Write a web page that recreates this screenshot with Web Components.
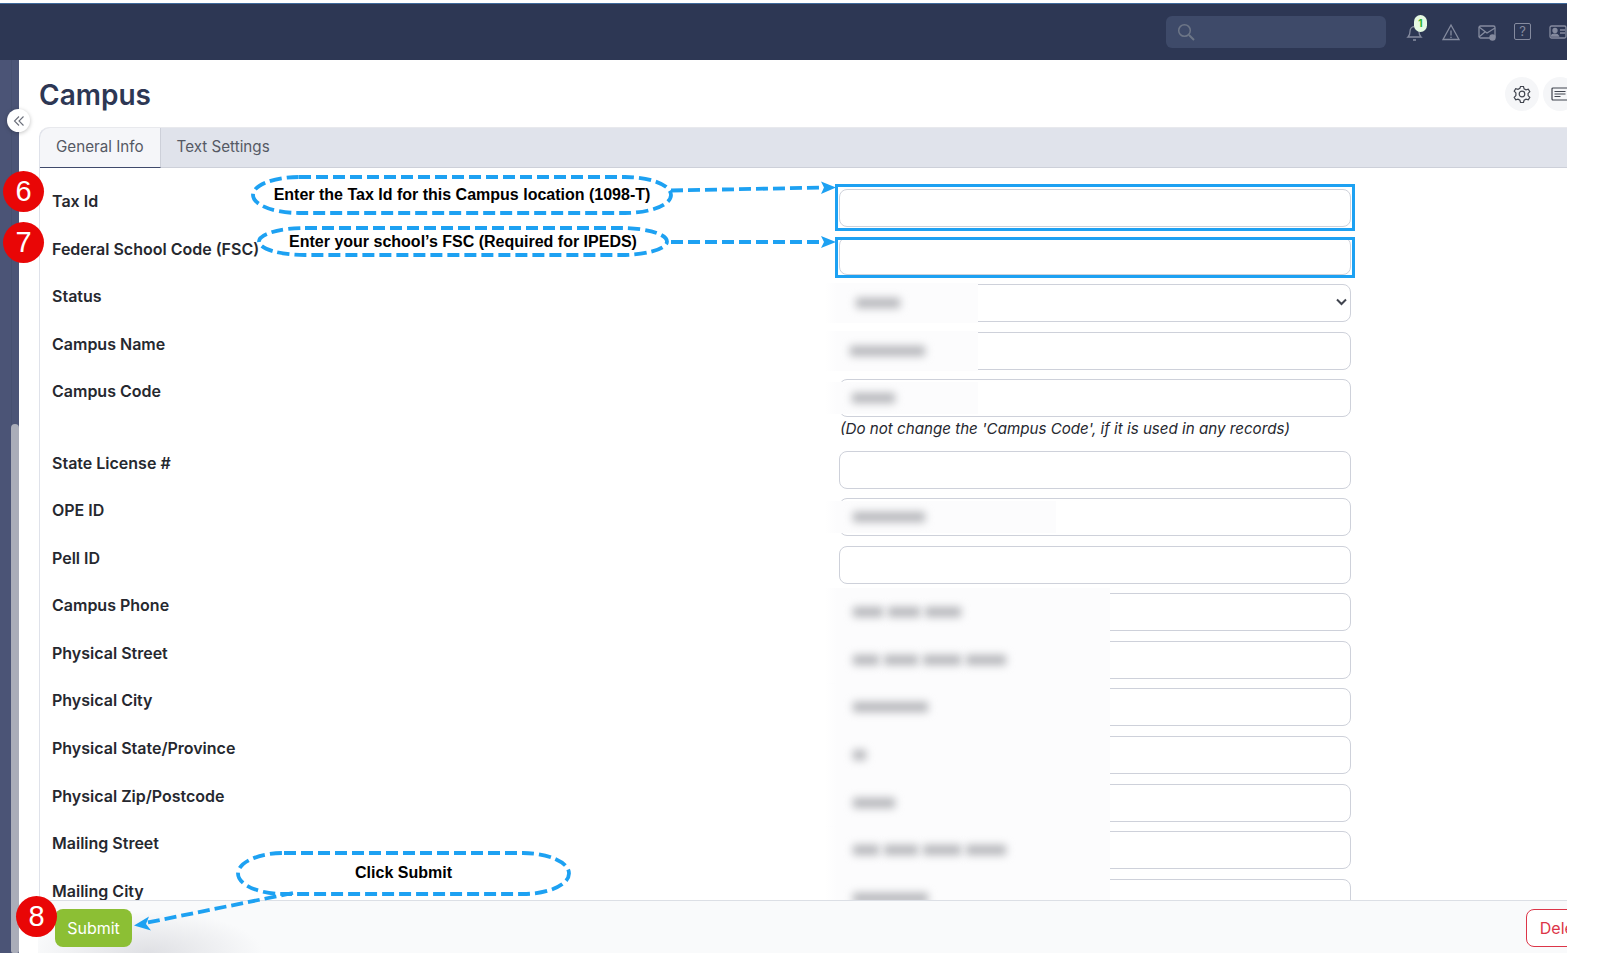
<!doctype html>
<html>
<head>
<meta charset="utf-8">
<title>Campus</title>
<style>
  html, body { margin: 0; padding: 0; background: #fff; }
  body { font-family: Inter, "Liberation Sans", sans-serif; }
</style>
</head>
<body>
<campus-app>
  <top-bar slot="top"></top-bar>
  <side-rail slot="side"></side-rail>
  <page-head slot="main" heading="Campus"></page-head>
  <tab-strip slot="main">
    <tab-item active>General Info</tab-item>
    <tab-item>Text Settings</tab-item>
  </tab-strip>
  <campus-form slot="main">
    <form-row label="Tax Id"><text-field style="--mark-top:-5px;--mark-bottom:-4px" marked></text-field></form-row>
    <form-row label="Federal School Code (FSC)"><text-field style="--mark-top:0px;--mark-bottom:-3px" marked></text-field></form-row>
    <form-row label="Status"><text-field kind="select" patch="139" bars="44" bar-left="17"></text-field></form-row>
    <form-row label="Campus Name"><text-field patch="139" bars="75" bar-left="11"></text-field></form-row>
    <form-row label="Campus Code" hint="(Do not change the 'Campus Code', if it is used in any records)"><text-field patch="139" bars="43" bar-left="13" inner></text-field></form-row>
    <form-row label="State License #"><text-field></text-field></form-row>
    <form-row label="OPE ID"><text-field patch="217" bars="72" bar-left="14" inner></text-field></form-row>
    <form-row label="Pell ID"><text-field></text-field></form-row>
    <form-row label="Campus Phone"><text-field patch="271" bars="30,32,36" bar-left="14" tall></text-field></form-row>
    <form-row label="Physical Street"><text-field patch="271" bars="26,34,38,40" bar-left="14" tall></text-field></form-row>
    <form-row label="Physical City"><text-field patch="271" bars="75" bar-left="14" tall></text-field></form-row>
    <form-row label="Physical State/Province"><text-field patch="271" bars="13" bar-left="14" tall></text-field></form-row>
    <form-row label="Physical Zip/Postcode"><text-field patch="271" bars="42" bar-left="14" tall></text-field></form-row>
    <form-row label="Mailing Street"><text-field patch="271" bars="26,34,38,40" bar-left="14" tall></text-field></form-row>
    <form-row label="Mailing City"><text-field patch="271" bars="75" bar-left="14" tall></text-field></form-row>
  </campus-form>
  <action-bar slot="main"></action-bar>
  <note-layer slot="notes">
    <step-badge style="left:3px;top:171px">6</step-badge>
    <step-badge style="left:3px;top:222px">7</step-badge>
    <step-badge style="left:16px;top:896px">8</step-badge>
    <note-bubble style="left:253px;top:177px;width:418px;height:36px;--text-shift:0px">Enter the Tax Id for this Campus location (1098-T)</note-bubble>
    <note-bubble style="left:259px;top:228px;width:408px;height:27px">Enter your school’s FSC (Required for IPEDS)</note-bubble>
    <note-bubble style="left:238px;top:853px;width:331px;height:41px;--text-shift:-1px">Click Submit</note-bubble>
  </note-layer>
</campus-app>

<script>
const ICON = 'fill="none" stroke="#858b9f" stroke-width="1.3"'

class CampusApp extends HTMLElement {
  constructor() {
    super()
    this.attachShadow({ mode: 'open' })
    this.shadowRoot.innerHTML = `
      <style>
        :host {
          display: block;
          position: relative;
          width: 1567px;
          height: 953px;
          overflow: hidden;
          padding-top: 3px;
          box-sizing: border-box;
        }
        .body { display: flex; height: 893px; width: 1620px; }
        .main { display: flex; flex-direction: column; width: 1601px; min-width: 0; }
      </style>
      <slot name="top"></slot>
      <div class="body">
        <slot name="side"></slot>
        <div class="main"><slot name="main"></slot></div>
      </div>
      <slot name="notes"></slot>
    `
  }
}

class TopBar extends HTMLElement {
  constructor() {
    super()
    this.attachShadow({ mode: 'open' })
    this.shadowRoot.innerHTML = `
      <style>
        :host {
          display: flex;
          align-items: center;
          box-sizing: border-box;
          width: 1620px;
          height: 57px;
          padding-left: 1166px;
          background: #2d3754;
          border-top: 1px solid #3f6a9c;
        }
        .search {
          display: flex;
          align-items: center;
          width: 220px;
          height: 32px;
          margin-right: 19px;
          padding-left: 11px;
          box-sizing: border-box;
          background: #3e4a69;
          border-radius: 6px;
        }
        .icons { display: flex; gap: 16px; }
        .icon { position: relative; width: 20px; height: 20px; }
        svg { display: block; }
        .badge {
          position: absolute;
          left: 9px;
          top: -7px;
          width: 13px;
          height: 17px;
          border-radius: 7px;
          background: #e5f9e2;
          color: #2db32d;
          font: 700 10px/17px Inter, sans-serif;
          text-align: center;
        }
        .help { font: 13px/20px Inter, sans-serif; color: #858b9f; text-align: center; border: 1.3px solid #858b9f; border-radius: 2px; box-sizing: border-box; width: 17px; height: 17px; line-height: 15px; margin: 1px 1px 0; }
      </style>
      <div class="search">
        <svg width="18" height="18" viewBox="0 0 18 18" fill="none" stroke="#6d7687" stroke-width="1.5"><circle cx="7.5" cy="7.5" r="5.8"/><path d="M12 12l5 5" stroke-width="2"/></svg>
      </div>
      <div class="icons">
        <div class="icon">
          <svg width="20" height="20" viewBox="0 0 20 20" ${ICON}><path d="M3 15c1.5-1.3 2-2.6 2-5.5C5 6.500 7 4.500 9.500 4.500S14 6.500 14 9.500c0 2.900.5 4.200 2 5.500z"/><path d="M8 18h3" stroke-width="1.6"/></svg>
          <span class="badge">1</span>
        </div>
        <div class="icon">
          <svg width="20" height="20" viewBox="0 0 20 20" ${ICON}><path d="M10 3L2 17.500h16z"/><path d="M10 8.500v5M10 14.800v1.200"/></svg>
        </div>
        <div class="icon">
          <svg width="20" height="20" viewBox="0 0 20 20" ${ICON}><rect x="2" y="4" width="16" height="12" rx="1.500"/><path d="M2 5l8 6 8-5M2 15l6-5"/><circle cx="15.500" cy="15.500" r="3.200" fill="#858b9f" stroke="none"/></svg>
        </div>
        <div class="icon help">?</div>
        <div class="icon">
          <svg width="20" height="20" viewBox="0 0 20 20" ${ICON}><rect x="2" y="4" width="16" height="12" rx="1.500"/><circle cx="7" cy="8.500" r="2" fill="#858b9f"/><path d="M3.500 14c.5-2.500 6-2.500 7 0z" fill="#858b9f"/><path d="M12 8h5M12 11h5"/></svg>
        </div>
      </div>
    `
  }
}

class SideRail extends HTMLElement {
  constructor() {
    super()
    this.attachShadow({ mode: 'open' })
    this.shadowRoot.innerHTML = `
      <style>
        :host {
          display: block;
          position: relative;
          flex: 0 0 19px;
          background: linear-gradient(to right, #4b5476 0, #4b5476 11px, #465070 11px, #465070 12px, #4b5476 12px);
        }
        .thumb {
          position: absolute;
          left: 11px;
          right: 0;
          top: 364px;
          bottom: 0;
          background: #aaadb9;
          border-radius: 4px 4px 2px 2px;
        }
        .collapse {
          position: absolute;
          left: 7px;
          top: 49px;
          width: 23px;
          height: 23px;
          background: #fff;
          border-radius: 50%;
          box-shadow: 0 1px 4px rgba(0, 0, 0, .25);
          display: flex;
          align-items: center;
          justify-content: center;
          z-index: 2;
        }
      </style>
      <div class="thumb"></div>
      <div class="collapse">
        <svg width="12" height="12" viewBox="0 0 12 12" fill="none" stroke="#6b6f7a" stroke-width="1.1"><path d="M6 1.500L1.500 6 6 10.500M10.500 1.500L6 6l4.500 4.500"/></svg>
      </div>
    `
  }
}

class PageHead extends HTMLElement {
  constructor() {
    super()
    this.attachShadow({ mode: 'open' })
    this.shadowRoot.innerHTML = `
      <style>
        :host {
          display: flex;
          align-items: center;
          justify-content: space-between;
          flex: 0 0 67px;
          padding: 5px 43px 0 20px;
          box-sizing: border-box;
        }
        h1 { margin: 0; font: 600 28px/1.2 Inter, sans-serif; color: #2d3754; }
        .tools { display: flex; gap: 4px; margin-top: -4px; }
        .tool {
          width: 34px;
          height: 34px;
          border-radius: 50%;
          background: #f5f6f8;
          display: flex;
          align-items: center;
          justify-content: center;
        }
      </style>
      <h1>${this.getAttribute('heading')}</h1>
      <div class="tools">
        <div class="tool">
          <svg width="18" height="18" viewBox="0 0 18 18" fill="none" stroke="#41454f" stroke-width="1.200"><path d="M7.500 1.500h3l.6 2.300 1.900 1 2.300-.7 1.500 2.600-1.700 1.700v2.200l1.700 1.700-1.500 2.600-2.300-.7-1.900 1-.6 2.300h-3l-.6-2.300-1.900-1-2.300.7-1.500-2.600 1.700-1.700V7.900L1.200 6.200l1.500-2.600 2.300.7 1.900-1z"/><circle cx="9" cy="9" r="2.800"/></svg>
        </div>
        <div class="tool">
          <svg width="18" height="16" viewBox="0 0 18 16" fill="none" stroke="#41454f" stroke-width="1.200"><rect x="1" y="2" width="16" height="12" rx="1"/><path d="M3.500 5.500h11M3.500 8h11M3.500 10.500h6"/></svg>
        </div>
      </div>
    `
  }
}

class TabStrip extends HTMLElement {
  constructor() {
    super()
    this.attachShadow({ mode: 'open' })
    this.shadowRoot.innerHTML = `
      <style>
        :host {
          display: flex;
          flex: 0 0 41px;
          box-sizing: border-box;
          margin-left: 20px;
          background: #e0e3eb;
          border-top: 1px solid #e8e9ed;
          border-bottom: 1px solid #cdd0d9;
          border-left: 1px solid #dfe2ea;
          border-top-left-radius: 10px;
        }
      </style>
      <slot></slot>
    `
  }
}

class TabItem extends HTMLElement {
  constructor() {
    super()
    this.attachShadow({ mode: 'open' })
    this.shadowRoot.innerHTML = `
      <style>
        :host {
          display: block;
          padding: 0 16px;
          font: 15.200px/38px Inter, sans-serif;
          color: #555964;
        }
        :host([active]) {
          background: #f5f6f9;
          margin-bottom: -1px;
          border-right: 1px solid #cdd0d9;
          border-bottom: 1px solid #3f4a6b;
          border-top-left-radius: 10px;
        }
      </style>
      <slot></slot>
    `
  }
}

class CampusForm extends HTMLElement {
  constructor() {
    super()
    this.attachShadow({ mode: 'open' })
    this.shadowRoot.innerHTML = `
      <style>
        :host {
          display: block;
          flex: 1;
          min-height: 0;
          overflow: hidden;
          margin-left: 20px;
          padding: 21px 0 0 12px;
          border-left: 1px solid #dfe2ea;
        }
      </style>
      <slot></slot>
    `
  }
}

class FormRow extends HTMLElement {
  constructor() {
    super()
    this.attachShadow({ mode: 'open' })
    const hint = this.getAttribute('hint')
    this.shadowRoot.innerHTML = `
      <style>
        :host {
          display: grid;
          grid-template-columns: 787px 512px;
          margin-bottom: 9.550px;
        }
        .label {
          font: 600 16px/24px Inter, sans-serif;
          color: #26282f;
        }
        .hint {
          font: italic 15.150px/24px Inter, sans-serif;
          color: #26282f;
          margin: 0 0 0 1px;
          height: 24px;
        }
      </style>
      <div class="label">${this.getAttribute('label')}</div>
      <div>
        <slot></slot>
        ${hint ? `<div class="hint">${hint}</div>` : ''}
      </div>
    `
  }
}

class TextField extends HTMLElement {
  constructor() {
    super()
    this.attachShadow({ mode: 'open' })
    const isSelect = this.getAttribute('kind') === 'select'
    const patch = this.getAttribute('patch')
    const bars = (this.getAttribute('bars') || '').split(',').filter(Boolean)
    this.shadowRoot.innerHTML = `
      <style>
        :host {
          display: block;
          position: relative;
          height: 38px;
        }
        .box {
          display: block;
          width: 100%;
          height: 38px;
          box-sizing: border-box;
          margin: 0;
          background: #fff;
          border: 1px solid #ced1da;
          border-radius: 8px;
          appearance: none;
        }
        .chevron { position: absolute; right: 4px; top: 14px; }
        .mark {
          position: absolute;
          left: -4px;
          right: -4px;
          top: var(--mark-top, -5px);
          bottom: var(--mark-bottom, -4px);
          border: 3px solid #1da1f2;
        }
        .patch {
          position: absolute;
          left: -14px;
          top: -1px;
          bottom: -1px;
          display: flex;
          align-items: center;
          gap: 5px;
          box-sizing: border-box;
          background: linear-gradient(to right, rgba(252,252,253,0), #fcfcfd 12px);
        }
        :host([inner]) .patch { top: 3px; bottom: 3px; }
        :host([tall]) .patch { top: -5px; bottom: -5px; }
        .bar { height: 10px; background: #b4b5b9; filter: blur(4px); }
      </style>
      ${isSelect ? '<select class="box"></select>' : '<input class="box" type="text">'}
      ${isSelect ? '<svg class="chevron" width="11" height="8" viewBox="0 0 11 8" fill="none" stroke="#41454f" stroke-width="2"><path d="M1 1.500l4.500 4.500L10 1.500"/></svg>' : ''}
      ${patch ? `<div class="patch" style="width:${+patch + 14}px;padding-left:${+this.getAttribute('bar-left') + 14}px">${bars.map(w => `<div class="bar" style="width:${w}px"></div>`).join('')}</div>` : ''}
      ${this.hasAttribute('marked') ? '<div class="mark"></div>' : ''}
    `
  }
}

class ActionBar extends HTMLElement {
  constructor() {
    super()
    this.attachShadow({ mode: 'open' })
    this.shadowRoot.innerHTML = `
      <style>
        :host {
          display: flex;
          align-items: center;
          justify-content: space-between;
          flex: 0 0 53px;
          box-sizing: border-box;
          margin-left: 19px;
          padding: 1px 18px 0 17px;
          border-top: 1px solid #dcdfe5;
          background:
            radial-gradient(ellipse 115px 42px at 110px 100%, #dfe0e4 0, rgba(223,224,228,0) 100%),
            #f9fafb;
        }
        button {
          height: 38px;
          box-sizing: border-box;
          border-radius: 8px;
          font: 16px Inter, sans-serif;
          padding: 0;
        }
        .submit { width: 77px; background: #8cbf34; border: 0; color: #fff; }
        .delete { width: 76px; background: #fff; border: 1px solid #dc3548; color: #dc3548; }
      </style>
      <button class="submit">Submit</button>
      <button class="delete">Delete</button>
    `
  }
}

class NoteLayer extends HTMLElement {
  constructor() {
    super()
    this.attachShadow({ mode: 'open' })
    this.shadowRoot.innerHTML = `
      <style>
        :host { display: block; position: absolute; inset: 0; pointer-events: none; }
        svg { position: absolute; left: 0; top: 0; }
      </style>
      <svg width="1567" height="953" fill="none" stroke="#1da1f2" stroke-width="3.800">
        <g stroke-dasharray="12 5">
          <path d="M671 190.500L826 187.500"/>
          <path d="M671 242H826"/>
          <path d="M293 893L145 923"/>
        </g>
        <g fill="#1da1f2" stroke="none">
          <path d="M836 187.500L821 181.500l3 6-3 6.500z"/>
          <path d="M836 242L821 236l3 6-3 6z"/>
          <path d="M134 925.500L149 916.500l-3 7.500 5 6.500z"/>
        </g>
      </svg>
      <slot></slot>
    `
  }
}

class NoteBubble extends HTMLElement {
  constructor() {
    super()
    this.attachShadow({ mode: 'open' })
    this.shadowRoot.innerHTML = `
      <style>
        :host {
          display: flex;
          align-items: center;
          justify-content: center;
          position: absolute;
          font: 700 16px "Liberation Sans", Arial, sans-serif;
          color: #000;
        }
        svg { position: absolute; inset: 0; width: 100%; height: 100%; overflow: visible; }
        rect { fill: none; stroke: #1da1f2; stroke-width: 3.800; stroke-dasharray: 12 5; }
        span { position: relative; white-space: nowrap; transform: translateY(var(--text-shift, 0)); }
      </style>
      <svg><rect x="0" y="0" width="100%" height="100%" rx="46" ry="50%"></rect></svg>
      <span><slot></slot></span>
    `
  }
}

class StepBadge extends HTMLElement {
  constructor() {
    super()
    this.attachShadow({ mode: 'open' })
    this.shadowRoot.innerHTML = `
      <style>
        :host {
          display: flex;
          align-items: center;
          justify-content: center;
          position: absolute;
          width: 41px;
          height: 41px;
          border-radius: 50%;
          background: #e90606;
          color: #fff;
          font: 400 29px "Liberation Sans", Arial, sans-serif;
        }
      </style>
      <slot></slot>
    `
  }
}

customElements.define('campus-app', CampusApp)
customElements.define('top-bar', TopBar)
customElements.define('side-rail', SideRail)
customElements.define('page-head', PageHead)
customElements.define('tab-strip', TabStrip)
customElements.define('tab-item', TabItem)
customElements.define('campus-form', CampusForm)
customElements.define('form-row', FormRow)
customElements.define('text-field', TextField)
customElements.define('action-bar', ActionBar)
customElements.define('note-layer', NoteLayer)
customElements.define('note-bubble', NoteBubble)
customElements.define('step-badge', StepBadge)
</script>
</body>
</html>
